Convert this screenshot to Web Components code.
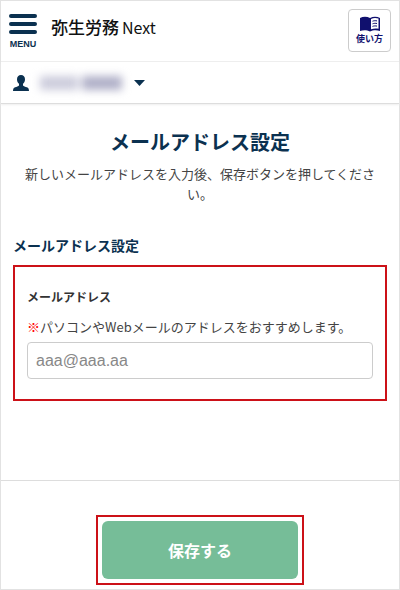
<!DOCTYPE html>
<html lang="ja">
<head>
<meta charset="utf-8">
<meta name="viewport" content="width=device-width, initial-scale=1">
<title>メールアドレス設定</title>
<style>
  :root {
    --navy: #0b3150;
    --indigo: #10106e;
    --text: #444;
    --line: #e2e2e2;
    --mark: #cc1118;
    --green: #76bd98;
  }
  * { box-sizing: border-box; }
  body {
    margin: 0;
    background: #fff;
    color: var(--text);
    font-family: "Noto Sans CJK JP", sans-serif;
    font-size: 13px;
    line-height: 20px;
  }
</style>
</head>
<body>
<app-frame>
  <app-header slot="header" brand="弥生労務" suffix="Next"></app-header>
  <user-bar slot="header"></user-bar>
  <page-intro heading="メールアドレス設定">新しいメールアドレスを入力後、保存ボタンを押してください。</page-intro>
  <form-section heading="メールアドレス設定">
    <mail-field label="メールアドレス" placeholder="aaa@aaa.aa">パソコンやWebメールのアドレスをおすすめします。</mail-field>
  </form-section>
  <save-bar slot="footer">保存する</save-bar>
</app-frame>

<script>
"use strict";

class BaseElement extends HTMLElement {
  constructor() {
    super();
    this.attachShadow({ mode: "open" });
  }

  connectedCallback() {
    this.shadowRoot.innerHTML = `
      <style>
        * { box-sizing: border-box; }
        :host { display: block; }
        button { font-family: inherit; cursor: pointer; margin: 0; }
      </style>
      ${this.template()}
    `;
  }
}

class AppFrame extends BaseElement {
  template() {
    return `
      <style>
        .frame {
          display: flex;
          flex-direction: column;
          min-height: 100vh;
          border: 1px solid var(--line);
        }
        main {
          flex: 1;
          padding: 24px 12px;
        }
      </style>
      <div class="frame">
        <slot name="header"></slot>
        <main><slot></slot></main>
        <slot name="footer"></slot>
      </div>
    `;
  }
}

class AppHeader extends BaseElement {
  template() {
    return `
      <style>
        header {
          display: flex;
          align-items: flex-start;
          gap: 14px;
          height: 61px;
          padding: 8px;
          border-bottom: 1px solid #eee;
        }
        button { background: none; }
        .menu {
          display: flex;
          flex-direction: column;
          align-items: center;
          padding: 4px 0 0;
          width: 28px;
          border: 0;
          color: var(--navy);
          font: bold 9px/12px "Liberation Sans", sans-serif;
        }
        .menu svg { display: block; margin-bottom: 3px; }
        .brand {
          flex: 1;
          display: flex;
          align-items: baseline;
          gap: 3px;
          margin: 0;
          padding-top: 6px;
          color: #111;
          font-size: 17px;
          font-weight: 500;
          line-height: 24px;
        }
        .brand span { font-size: 16px; font-weight: 400; }
        .guide {
          display: flex;
          flex-direction: column;
          align-items: center;
          width: 43px;
          height: 43px;
          padding: 6px 0 0;
          border: 1px solid #ccc;
          border-radius: 4px;
          color: var(--indigo);
          font-size: 9px;
          font-weight: bold;
          line-height: 14px;
        }
        .guide svg { display: block; }
      </style>
      <header>
        <button class="menu" type="button">
          <svg width="28" height="22" viewBox="0 0 28 22" fill="currentColor" aria-hidden="true">
            <rect y="1" width="28" height="4" rx="2"/>
            <rect y="9" width="28" height="4" rx="2"/>
            <rect y="17" width="28" height="4" rx="2"/>
          </svg>
          MENU
        </button>
        <h1 class="brand">${this.getAttribute("brand")}<span>${this.getAttribute("suffix")}</span></h1>
        <button class="guide" type="button">
          <svg width="20" height="16" viewBox="0 0 20 16" aria-hidden="true">
            <path fill="currentColor" d="M0 2C3 .2 7 .2 10 2c3-1.800 7-1.800 10 0v13c-3-1.200-7-1.200-10 .5C7 13.800 3 13.800 0 15z"/>
            <path fill="#fff" d="M11 3c2.500-1.300 5-1.300 7.500-.4v10.200c-2.500-.6-5-.4-7.500.5z"/>
            <path stroke="currentColor" fill="none" d="M12.500 5.200c1.600-.6 3-.6 4.500-.3M12.500 7.800c1.600-.6 3-.6 4.500-.3M12.500 10.400c1.600-.6 3-.6 4.500-.3"/>
          </svg>
          使い方
        </button>
      </header>
    `;
  }
}

class UserBar extends BaseElement {
  template() {
    return `
      <style>
        button {
          display: flex;
          align-items: center;
          width: 100%;
          height: 42px;
          padding: 0 12px;
          border: 0;
          border-bottom: 1px solid #ddd;
          box-shadow: 0 1px 2px #eee;
          background: #fff;
          color: var(--navy);
        }
        /* the user's name is masked */
        .name {
          display: flex;
          gap: 4px;
          margin: 0 12px 0 11px;
          filter: blur(4px);
        }
        .name i { height: 14px; background: #b0b0c8; }
        .name i:first-child { width: 38px; background: #ccccdc; }
        .name i:last-child { width: 40px; }
      </style>
      <button type="button" aria-label="アカウント">
        <svg width="16" height="16" viewBox="0 0 16 16" fill="currentColor" aria-hidden="true">
          <path d="M8 0c2.500 0 4 1.800 4 4.300 0 1.900-.8 3.600-2 4.500v1.600c.6.800 2.400 1.200 3.900 1.900C15.400 13 16 14 16 16H0c0-2 .6-3 2.100-3.700C3.600 11.600 5.400 11.200 6 10.400V8.800C4.800 7.900 4 6.200 4 4.300 4 1.800 5.500 0 8 0z"/>
        </svg>
        <span class="name"><i></i><i></i></span>
        <svg width="11" height="6" viewBox="0 0 11 6" fill="currentColor" aria-hidden="true">
          <path d="M0 0h11L5.500 6z"/>
        </svg>
      </button>
    `;
  }
}

class PageIntro extends BaseElement {
  template() {
    return `
      <style>
        :host { text-align: center; }
        h2 {
          margin: 0 0 8px;
          color: var(--navy);
          font-size: 20px;
          line-height: 28px;
        }
        p { margin: 0; padding: 0 8px; }
      </style>
      <h2>${this.getAttribute("heading")}</h2>
      <p><slot></slot></p>
    `;
  }
}

class FormSection extends BaseElement {
  template() {
    return `
      <style>
        section { margin-top: 31px; }
        h3 {
          margin: 0 0 10px;
          color: var(--navy);
          font-size: 14px;
          line-height: 20px;
        }
        .box {
          padding: 20px 12px;
          border: 2px solid var(--mark);
        }
      </style>
      <section>
        <h3>${this.getAttribute("heading")}</h3>
        <div class="box"><slot></slot></div>
      </section>
    `;
  }
}

class MailField extends BaseElement {
  template() {
    return `
      <style>
        label {
          display: block;
          margin-bottom: 10px;
          color: #333;
          font-size: 12px;
          font-weight: bold;
        }
        p { margin: 0 0 5px; }
        .mark { color: #f00; font-weight: 900; }
        input {
          display: block;
          width: 100%;
          height: 37px;
          padding: 0 8px;
          border: 1px solid #ccc;
          border-radius: 4px;
          font: 16px "Liberation Sans", sans-serif;
        }
        input::placeholder { color: #888; opacity: 1; }
      </style>
      <label for="mail">${this.getAttribute("label")}</label>
      <p id="note"><span class="mark">※</span><slot></slot></p>
      <input id="mail" type="email" aria-describedby="note" placeholder="${this.getAttribute("placeholder")}">
    `;
  }
}

class SaveBar extends BaseElement {
  template() {
    return `
      <style>
        footer {
          display: flex;
          justify-content: center;
          padding: 34px 12px 4px;
          border-top: 1px solid #ddd;
        }
        .box {
          padding: 4px;
          border: 2px solid var(--mark);
        }
        button {
          display: block;
          width: 196px;
          height: 58px;
          border: 0;
          border-radius: 6px;
          background: var(--green);
          color: #fff;
          font-size: 16px;
          font-weight: bold;
        }
      </style>
      <footer>
        <div class="box"><button type="submit"><slot></slot></button></div>
      </footer>
    `;
  }
}

customElements.define("app-frame", AppFrame);
customElements.define("app-header", AppHeader);
customElements.define("user-bar", UserBar);
customElements.define("page-intro", PageIntro);
customElements.define("form-section", FormSection);
customElements.define("mail-field", MailField);
customElements.define("save-bar", SaveBar);
</script>
</body>
</html>
